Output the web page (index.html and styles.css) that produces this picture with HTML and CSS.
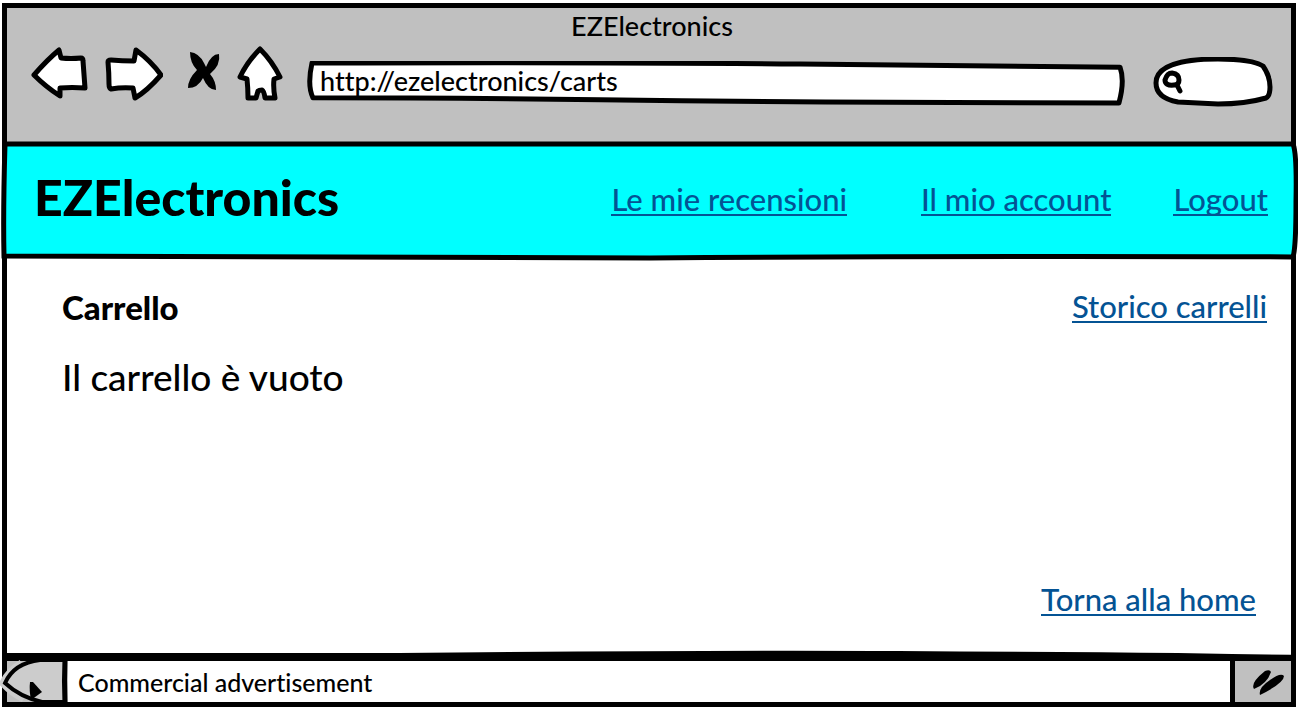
FILE: index.html
```html
<!DOCTYPE html>
<html lang="it">
<head>
<meta charset="utf-8">
<meta name="viewport" content="width=device-width, initial-scale=1">
<title>EZElectronics</title>
<link rel="stylesheet" href="styles.css">
</head>
<body>
<div class="window">
  <div class="chrome">
    <div class="window-title">EZElectronics</div>
    <div class="toolbar">
      <button class="tool" type="button" aria-label="Indietro">
        <svg class="sketch" width="58" height="60" viewBox="31 46 58 60"><path d="M34 75Q47 60 59 50Q60 54 61 58Q71 59 81 58Q83 58 83 61Q84 75 85 88Q72 87 60 88L60 96Q46 87 34 75Z"/></svg>
      </button>
      <button class="tool" type="button" aria-label="Avanti">
        <svg class="sketch" width="58" height="60" viewBox="105 46 58 60"><path d="M108 62Q108 60 111 60Q122 61 134 61L136 50Q151 61 161 75Q147 91 135 98L133 88Q122 87 111 89Q109 88 109 84Q109 73 108 62Z"/></svg>
      </button>
      <button class="tool" type="button" aria-label="Interrompi">
        <svg class="solid" width="42" height="60" viewBox="179 46 42 60"><path d="M190 52Q199 53 204 63L206 67Q211 54 219 54Q221 65 210 74Q216 81 216 90Q208 90 203 78Q198 88 188 88Q188 79 197 70Q190 63 190 52Z"/></svg>
      </button>
      <button class="tool" type="button" aria-label="Home">
        <svg class="sketch" width="46" height="60" viewBox="237 46 46 60"><path d="M260 49Q272 61 280 77L274 79Q273 88 275 98L265 98Q264 91 262 90Q259 90 258 91L256 98L248 98Q248 88 247 79L240 77Q247 62 260 49Z"/></svg>
      </button>
      <div class="address">
        <svg class="outline" viewBox="307 61 818 45" preserveAspectRatio="none"><path vector-effect="non-scaling-stroke" d="M312 63Q600 62 800 64Q1000 66 1120 67Q1125 80 1119 102Q850 102 600 99Q450 97 313 97Q307 85 312 63Z"/></svg>
        <input class="field" type="text" aria-label="Indirizzo" value="http://ezelectronics/carts">
      </div>
      <div class="search">
        <svg class="outline" viewBox="1153 57 120 50" preserveAspectRatio="none"><path vector-effect="non-scaling-stroke" d="M1156 83C1156 67 1178 59 1218 59Q1252 59 1263 66Q1270 76 1270 87Q1270 96 1266 98Q1245 104 1218 104L1178 102Q1156 98 1156 83Z"/></svg>
        <svg class="lens" width="24" height="24" viewBox="1160 73 24 24"><path d="M1164 83Q1166 76 1171 76Q1178 77 1178 83Q1178 88 1173 88Q1164 89 1164 83ZM1176 88L1179 94"/></svg>
        <input class="field" type="search" aria-label="Cerca">
      </div>
    </div>
  </div>

  <header class="banner">
    <svg class="banner-shape" viewBox="0 0 1298 118" preserveAspectRatio="none"><path vector-effect="non-scaling-stroke" d="M5 3Q400 4 650 3L1293 3Q1297 12 1296 60Q1296 105 1293 114Q950 113 650 115Q300 115 4 113Q3 70 5 3Z"/></svg>
    <h1 class="brand">EZElectronics</h1>
    <nav class="menu">
      <a class="link" href="#">Le mie recensioni</a>
      <a class="link link-account" href="#">Il mio account</a>
      <a class="link" href="#">Logout</a>
    </nav>
  </header>

  <main class="content">
    <div class="heading-row">
      <h2 class="heading">Carrello</h2>
      <a class="link" href="#">Storico carrelli</a>
    </div>
    <p class="message">Il carrello è vuoto</p>
    <a class="link home-link" href="#">Torna alla home</a>
  </main>

  <footer class="status">
    <svg class="status-line" viewBox="7 650 1286 12" preserveAspectRatio="none"><path d="M7 653L400 653Q700 650 900 651Q1060 652 1180 653L1293 655V661L7 661Z"/></svg>
    <svg class="knob" width="68" height="54" viewBox="0 654 68 54" aria-hidden="true"><path class="knob-halo" d="M22 664Q10 671 4 683Q12 692 24 698"/><path class="knob-face" d="M66 660H40Q14 663 5 683Q20 697 42 702H66"/><path class="knob-edge" d="M65 658Q64 680 65 704"/><path class="knob-mark" d="M30 682L33 682L42 692L31 700Q29 690 30 682Z"/></svg>
    <div class="ad">Commercial advertisement</div>
    <svg class="grip" width="56" height="48" viewBox="1237 656 56 48" aria-hidden="true"><path d="M1256 691Q1252 685 1267 673Q1272 671 1273 674Q1269 686 1256 691ZM1262 697Q1260 690 1272 682Q1283 674 1286 678Q1286 685 1262 697Z"/></svg>
  </footer>
</div>
</body>
</html>
```
FILE: styles.css
```css
* {
  box-sizing: border-box;
}

body {
  margin: 0;
  background: #fff;
  color: #000;
  font-family: Lato, "Liberation Sans", sans-serif;
  font-weight: 500;
  font-variant-ligatures: none;
}

.window {
  display: flex;
  flex-direction: column;
  min-height: calc(100vh - 6px);
  margin: 3px 2px;
  border: 5px solid #000;
}

.chrome {
  padding: 2px 18px 35px 24px;
  background: #c0c0c0;
}

.window-title {
  font-size: 27px;
  line-height: 32px;
  text-align: center;
}

.toolbar {
  display: flex;
  align-items: flex-start;
  gap: 16px;
  margin-top: 4px;
}

.tool {
  flex: none;
  padding: 0;
  border: 0;
  background: none;
}

.tool svg {
  display: block;
}

.sketch,
.outline {
  fill: #fff;
  stroke: #000;
  stroke-width: 5px;
  stroke-linejoin: round;
}

.address,
.search {
  position: relative;
  display: flex;
  align-items: center;
}

.address {
  flex: 1;
  height: 46px;
  margin-top: 15px;
  margin-left: 8px;
}

.search {
  width: 120px;
  height: 50px;
  margin-top: 11px;
  margin-left: 12px;
  padding-left: 8px;
}

.outline {
  position: absolute;
  inset: 0;
  width: 100%;
  height: 100%;
}

.field {
  position: relative;
  flex: 1;
  min-width: 0;
  height: 32px;
  padding: 0;
  border: 0;
  outline: 0;
  background: none;
  color: #000;
  font: inherit;
  font-size: 27px;
}

.address .field {
  margin: 0 13px 8px;
}

.search .field {
  margin-right: 12px;
}

.lens {
  position: relative;
  flex: none;
  fill: none;
  stroke: #000;
  stroke-width: 5px;
  stroke-linecap: round;
}

.banner {
  position: relative;
  display: flex;
  align-items: center;
  justify-content: space-between;
  height: 120px;
  margin: -1px -7px 0;
  padding: 0 30px 8px 34px;
}

.banner-shape {
  position: absolute;
  inset: 0;
  width: 100%;
  height: 100%;
  overflow: visible;
  fill: #0ff;
  stroke: #000;
  stroke-width: 5px;
}

.brand {
  position: relative;
  margin: 0;
  font-size: 50px;
  line-height: 60px;
  font-weight: 900;
}

.menu {
  position: relative;
  display: flex;
  gap: 62px;
  padding-top: 5px;
}

.link {
  border-bottom: 2px solid #045394;
  color: #045394;
  font-size: 31px;
  line-height: 30px;
  text-decoration: none;
}

.link-account {
  margin-left: 12px;
}

.content {
  display: flex;
  flex: 1;
  flex-direction: column;
  padding: 28px 24px 38px 55px;
}

.heading-row {
  display: flex;
  align-items: center;
  justify-content: space-between;
}

.heading {
  margin: 0;
  font-size: 33px;
  line-height: 36px;
  font-weight: 900;
}

.message {
  margin: 30px 0;
  font-size: 37px;
  line-height: 44px;
}

.home-link {
  align-self: flex-end;
  margin-top: auto;
  margin-right: 11px;
}

.status {
  position: relative;
  display: flex;
  height: 48px;
  background: #c0c0c0;
}

.status-line {
  position: absolute;
  top: -4px;
  left: 0;
  width: 100%;
  height: 12px;
}

.knob {
  position: relative;
  flex: none;
  margin-left: -7px;
}

.knob-halo {
  fill: none;
  stroke: #ccc;
  stroke-width: 9px;
}

.knob-face {
  fill: #ccc;
  stroke: #000;
  stroke-width: 4px;
}

.knob-edge {
  fill: none;
  stroke: #000;
  stroke-width: 5px;
}

.ad {
  flex: 1;
  padding: 8px 10px;
  border-top: 6px solid #000;
  border-right: 5px solid #000;
  border-top-right-radius: 5px;
  background: #fff;
  font-size: 25px;
  line-height: 28px;
}

.grip {
  flex: none;
}
```
